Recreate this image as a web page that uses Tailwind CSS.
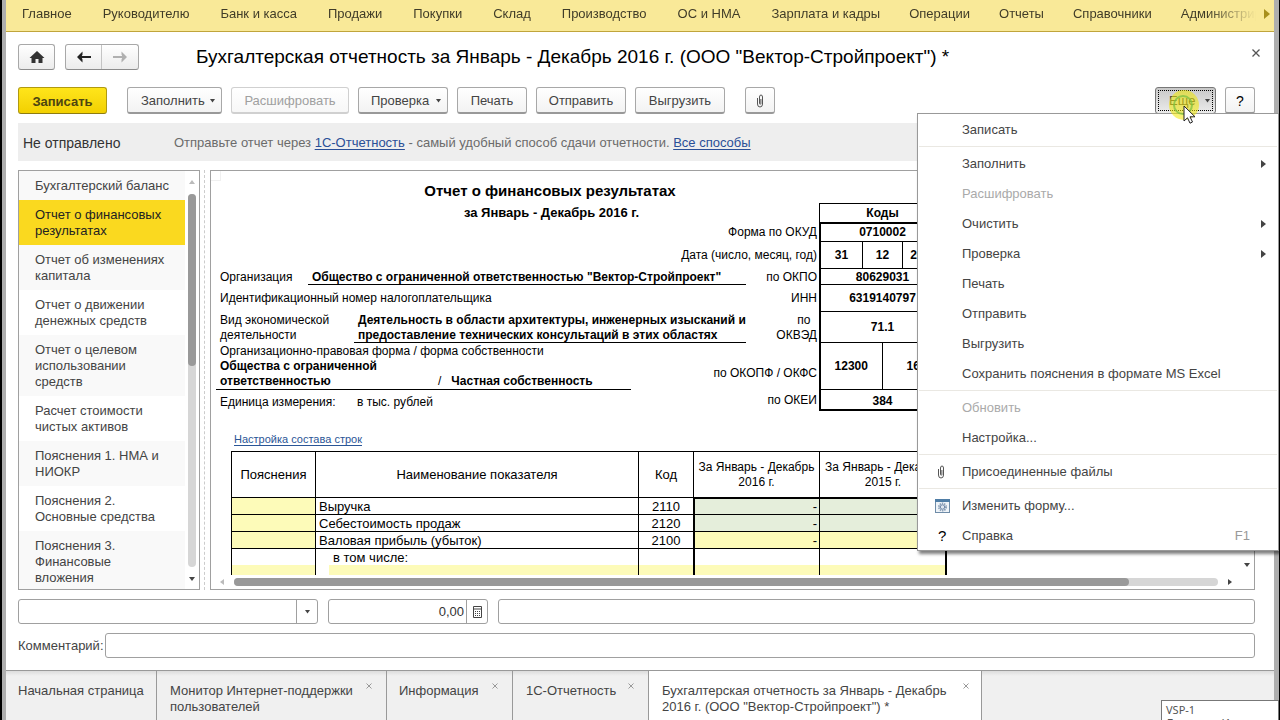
<!DOCTYPE html>
<html lang="ru">
<head>
<meta charset="utf-8">
<title>Бухгалтерская отчетность</title>
<script src="https://cdn.jsdelivr.net/npm/@tailwindcss/browser@4"></script>
</head>
<body class="h-screen overflow-hidden bg-black font-['Liberation_Sans',Arial,sans-serif] text-[13px] leading-4 text-[#444]">
<div class="relative flex h-screen flex-col overflow-hidden border-l-2 border-r border-black bg-white">
 <div class="flex min-h-0 flex-1 flex-col border-l-4 border-r-5 border-[#aeaeae]">

  <nav class="flex h-8 shrink-0 items-center border-b border-[#c0a53c] bg-[#f9e998] pl-4 pr-1 pb-1 text-[#403c28]">
   <div class="flex min-w-0 flex-1 gap-[29px] overflow-hidden whitespace-nowrap mask-r-from-96%">
    <div class="flex gap-[31px]"><a href="#">Главное</a><a href="#">Руководителю</a><a href="#">Банк и касса</a><a href="#">Продажи</a><a href="#">Покупки</a><a href="#">Склад</a><a href="#">Производство</a><a href="#">ОС и НМА</a><a href="#">Зарплата и кадры</a></div>
    <div class="flex gap-[29px]"><a href="#">Операции</a><a href="#">Отчеты</a><a href="#">Справочники</a><a href="#">Администрирование</a></div>
   </div>
   <button aria-label="Далее" class="ml-2"><svg class="h-2.5 w-1.5" viewBox="0 0 6 10"><path d="M0 0 6 5 0 10z" fill="#a8901c"/></svg></button>
  </nav>

  <main class="flex min-h-0 flex-1 flex-col pt-3 pr-[19px] pb-3 pl-3">
   <header class="flex h-[26px] shrink-0 items-center">
    <button aria-label="Домой" class="flex h-[26px] w-[37px] items-center justify-center rounded-[3px] border border-[#a8a8a8] border-b-[#8c8c8c] bg-linear-to-b from-white to-[#ececec] mr-[10px]"><svg class="h-3 w-4" viewBox="0 0 16 12"><path d="M8 0 15.500 7H13.500V12H9.500V8H6.500V12H2.500V7H.5z" fill="#333"/></svg></button>
    <div class="flex h-[26px] rounded-[3px] border border-[#a8a8a8] border-b-[#8c8c8c] bg-linear-to-b from-white to-[#ececec]">
     <button aria-label="Назад" class="flex w-9 items-center justify-center border-r border-[#c4c4c4]"><svg class="h-3 w-3.5" viewBox="0 0 14 12"><path d="M0 6 5.500 .5 5.500 3.500 4.800 5H14V7H4.800L5.500 8.500V11.500z" fill="#222"/></svg></button>
     <button aria-label="Вперед" class="flex w-9 items-center justify-center"><svg class="h-3 w-3.5" viewBox="0 0 14 12"><path d="M14 6 8.500 .5 8.500 3.500 9.200 5H0V7H9.200L8.500 8.500V11.500z" fill="#b0b0b0"/></svg></button>
    </div>
    <h1 class="ml-[57px] flex-1 whitespace-nowrap text-[19px] leading-6 text-black">Бухгалтерская отчетность за Январь - Декабрь 2016 г. (ООО "Вектор-Стройпроект") *</h1>
    <button aria-label="Закрыть" class="-mr-[5px] mb-2"><svg class="h-2 w-2" viewBox="0 0 8 8"><path d="M.5.5 7.500 7.500M7.500.5.5 7.500" stroke="#555" stroke-width="1.300"/></svg></button>
   </header>

   <div class="mt-[17px] flex h-[27px] shrink-0 items-stretch text-[#444] [&>button]:pt-0.5">
    <button class="w-[89px] rounded-[3px] border border-[#b09a10] border-b-[#8e7c10] bg-linear-to-b from-[#ffe51a] to-[#f2d000] font-bold text-[#4d4510]">Записать</button>
    <button class="ml-5 flex w-[95px] items-center justify-between rounded-[3px] border border-[#a8a8a8] border-b-2 border-b-[#999] bg-linear-to-b from-white to-[#f3f3f3] pl-[13px] pr-1.5">Заполнить<svg class="h-1 w-[5px]" viewBox="0 0 5 4"><path d="M0 0H5L2.500 3.500z" fill="#444"/></svg></button>
    <button disabled class="ml-[9px] w-[118px] rounded-[3px] border border-[#d0d0d0] border-b-2 bg-linear-to-b from-white to-[#f7f7f7] text-[#a0a0a0]">Расшифровать</button>
    <button class="ml-[9px] flex w-[90px] items-center justify-between rounded-[3px] border border-[#a8a8a8] border-b-2 border-b-[#999] bg-linear-to-b from-white to-[#f3f3f3] pl-[12px] pr-1.5">Проверка<svg class="h-1 w-[5px]" viewBox="0 0 5 4"><path d="M0 0H5L2.500 3.500z" fill="#444"/></svg></button>
    <button class="ml-[9px] w-[70px] rounded-[3px] border border-[#a8a8a8] border-b-2 border-b-[#999] bg-linear-to-b from-white to-[#f3f3f3]">Печать</button>
    <button class="ml-[9px] w-[90px] rounded-[3px] border border-[#a8a8a8] border-b-2 border-b-[#999] bg-linear-to-b from-white to-[#f3f3f3]">Отправить</button>
    <button class="ml-[9px] w-[90px] rounded-[3px] border border-[#a8a8a8] border-b-2 border-b-[#999] bg-linear-to-b from-white to-[#f3f3f3]">Выгрузить</button>
    <button aria-label="Присоединенные файлы" class="ml-5 flex w-[30px] items-center justify-center rounded-[3px] border border-[#a8a8a8] border-b-2 border-b-[#999] bg-linear-to-b from-white to-[#f3f3f3]"><svg class="h-3.5 w-2" viewBox="0 0 8 14" fill="none" stroke="#555"><path d="M1.500 4V10A2.500 3 0 0 0 6.500 10V3A1.500 2 0 0 0 3.500 3V9.500A.7.7 0 0 0 4.900 9.500V5"/></svg></button>
    <button class="ml-auto flex w-[61px] items-center rounded-[3px] border border-[#777] bg-linear-to-b from-[#c8c8c8] to-[#ececec] p-0.5"><span class="flex h-full flex-1 items-center justify-between border border-dotted border-black pl-2.5 pr-0.5">Еще<svg class="h-1 w-[5px]" viewBox="0 0 5 4"><path d="M0 0H5L2.500 3.500z" fill="#444"/></svg></span></button>
    <button class="ml-[9px] w-[30px] rounded-[3px] border border-[#a8a8a8] border-b-2 border-b-[#999] bg-linear-to-b from-white to-[#f3f3f3] text-sm text-black">?</button>
   </div>

   <div class="mt-[9px] flex h-[38px] shrink-0 items-center whitespace-nowrap bg-[#eee] pt-0.5 pl-[5px]">
    <p class="w-[151px] text-[14px] text-[#333]">Не отправлено</p>
    <p class="text-[#6b6b6b]">Отправьте отчет через <a href="#" class="text-[#2a4f97] underline underline-offset-2">1С-Отчетность</a> - самый удобный способ сдачи отчетности. <a href="#" class="text-[#2a4f97] underline underline-offset-2">Все способы</a></p>
   </div>

   <div class="mt-[9px] flex min-h-0 flex-1">
    <aside class="flex w-[182px] shrink-0 overflow-hidden border border-[#a0a0a0] text-[#444]">
     <ul class="w-[166px] [&_a]:block [&_a]:px-4 [&_a]:pt-[7px] [&_a]:pb-1.5 [&>li:nth-child(odd)]:bg-[#f9f9f9]">
      <li><a href="#">Бухгалтерский баланс</a></li>
      <li><a href="#" class="bg-[#fad91f] text-[#222]">Отчет о финансовых<br>результатах</a></li>
      <li><a href="#">Отчет об изменениях<br>капитала</a></li>
      <li><a href="#">Отчет о движении<br>денежных средств</a></li>
      <li><a href="#">Отчет о целевом<br>использовании<br>средств</a></li>
      <li><a href="#">Расчет стоимости<br>чистых активов</a></li>
      <li><a href="#">Пояснения 1. НМА и<br>НИОКР</a></li>
      <li><a href="#">Пояснения 2.<br>Основные средства</a></li>
      <li><a href="#">Пояснения 3.<br>Финансовые<br>вложения</a></li>
     </ul>
     <div class="flex flex-1 flex-col items-center pt-[9px] pb-2">
      <svg class="h-1 w-1.5" viewBox="0 0 6 4"><path d="M0 4H6L3 0z" fill="#bbb"/></svg>
      <div class="my-[10px] w-2 flex-1 rounded-full bg-[#d6d6d6]"><div class="h-[46%] rounded-full bg-[#999]"></div></div>
      <svg class="h-1 w-1.5" viewBox="0 0 6 4"><path d="M0 0H6L3 4z" fill="#444"/></svg>
     </div>
    </aside>
    <div class="mx-1 w-px border-l border-dashed border-[#ccc]"></div>

    <section class="ml-px flex min-w-0 flex-1 flex-col border border-[#a0a0a0] text-black">
     <div class="flex min-h-0 flex-1">
      <div class="min-w-0 flex-1 overflow-hidden whitespace-nowrap text-xs leading-[15px]">
       <div class="h-2.5 w-2.5 border-r border-b border-[#f0f0f0]"></div>
       <div class="w-[736px] pl-[9px]">
        <h2 class="h-[22px] w-[660px] text-center text-[15px] font-bold leading-5">Отчет о финансовых результатах</h2>
        <div class="flex h-[19px]">
         <p class="w-[599px] pl-[61px] text-center font-bold leading-5"><span class="block w-[541px] text-[13px]">за Январь - Декабрь 2016 г.</span></p>
         <p class="w-[127px] border border-b-0 border-black text-center font-bold leading-[18px]">Коды</p>
        </div>
        <div class="flex h-[19px]">
         <p class="w-[599px] pr-0.5 text-right leading-5">Форма по ОКУД</p>
         <p class="w-[127px] border-x-2 border-t-2 border-black text-center font-bold leading-[17px]">0710002</p>
        </div>
        <div class="flex h-[27px]">
         <p class="w-[599px] pr-0.5 text-right leading-7">Дата (число, месяц, год)</p>
         <div class="grid w-[127px] grid-cols-3 border-x-2 border-t border-black text-center font-bold leading-[26px]"><p>31</p><p class="border-x border-black">12</p><p>2016</p></div>
        </div>
        <div class="flex h-4 leading-[18px]">
         <p class="w-[88px]">Организация</p>
         <p class="h-[17px] w-[438px] border-b border-black pl-1 font-bold">Общество с ограниченной ответственностью "Вектор-Стройпроект"</p>
         <p class="w-[73px] pr-0.5 text-right">по ОКПО</p>
         <p class="w-[127px] border-x-2 border-t border-black text-center font-bold leading-4">80629031</p>
        </div>
        <div class="flex h-[27px] leading-[29px]">
         <p class="w-[526px]">Идентификационный номер налогоплательщика</p>
         <p class="w-[73px] pr-0.5 text-right">ИНН</p>
         <p class="w-[127px] border-x-2 border-t border-black text-center font-bold leading-[27px]">6319140797</p>
        </div>
        <div class="flex h-[31px]">
         <p class="w-[134px] pt-0.5">Вид экономической<br>деятельности</p>
         <p class="h-8 w-[392px] border-b border-black pt-0.5 pl-1 font-bold">Деятельность в области архитектуры, инженерных изысканий и<br>предоставление технических консультаций в этих областях</p>
         <p class="w-[73px] pt-0.5 pr-0.5 text-right">по &nbsp;<br>ОКВЭД</p>
         <p class="w-[127px] border-x-2 border-t border-black text-center font-bold leading-[30px]">71.1</p>
        </div>
        <div class="flex h-[47px]">
         <div class="w-[411px] pt-0.5">
          <p>Организационно-правовая форма / форма собственности</p>
          <div class="-ml-1 flex items-end border-b border-black pl-1 font-bold"><p class="w-[218px]">Общества с ограниченной<br>ответственностью</p><p><span class="font-normal">/</span>&nbsp;&nbsp; Частная собственность</p></div>
         </div>
         <p class="w-[188px] pt-6 pr-0.5 text-right">по ОКОПФ / ОКФС</p>
         <div class="grid w-[127px] grid-cols-2 border-x-2 border-t border-black text-center font-bold leading-[46px]"><p class="border-r border-black">12300</p><p>16</p></div>
        </div>
        <div class="flex h-[22px] leading-[26px]">
         <p class="w-[137px]">Единица измерения:</p><p class="w-[389px]">в тыс. рублей</p>
         <p class="w-[73px] pr-0.5 text-right leading-[22px]">по ОКЕИ</p>
         <p class="w-[127px] border-x-2 border-t border-b-2 border-black text-center font-bold leading-[22px]">384</p>
        </div>
        <p class="mt-[18px] pl-3.5 text-[11px] leading-5"><a href="#" class="text-[#2a5596] underline underline-offset-2">Настройка состава строк</a></p>
       </div>
       <table class="mt-0.5 ml-5 w-[716px] table-fixed border-separate border-spacing-0 border-r border-black text-[13px] [&_td]:border-black [&_td]:p-0 [&_th]:border-t [&_th]:border-l [&_th]:border-black [&_th]:p-0 [&_th]:font-normal">
        <colgroup><col class="w-[84px]"><col class="w-[323px]"><col class="w-[55px]"><col class="w-[126px]"><col></colgroup>
        <thead><tr class="h-[46px]"><th>Пояснения</th><th>Наименование показателя</th><th>Код</th><th class="text-xs leading-[15px]">За Январь - Декабрь<br>2016 г.</th><th class="text-xs leading-[15px]">За Январь - Декабрь<br>2015 г.</th></tr></thead>
        <tbody>
         <tr class="h-[17px]"><td class="border-t border-l bg-[#fdfbb9]"></td><td class="border-t border-l"><span class="pl-[3px]">Выручка</span></td><td class="border-t border-l text-center">2110</td><td class="border-t-2 border-l-2 bg-[#e5eedb] text-right"><span class="pr-0.5">-</span></td><td class="border-t-2 border-l border-r bg-[#e5eedb] text-right"><span class="pr-0.5">-</span></td></tr>
         <tr class="h-[17px]"><td class="border-t border-l bg-[#fdfbb9]"></td><td class="border-t border-l"><span class="pl-[3px]">Себестоимость продаж</span></td><td class="border-t border-l text-center">2120</td><td class="border-t border-l-2 bg-[#e5eedb] text-right"><span class="pr-0.5">-</span></td><td class="border-t border-l border-r bg-[#e5eedb] text-right"><span class="pr-0.5">-</span></td></tr>
         <tr class="h-[17px]"><td class="border-t border-l bg-[#fdfbb9]"></td><td class="border-t border-l"><span class="pl-[3px]">Валовая прибыль (убыток)</span></td><td class="border-t border-l text-center">2100</td><td class="border-t border-l-2 bg-[#fdfbb9] text-right"><span class="pr-0.5">-</span></td><td class="border-t border-l border-r bg-[#fdfbb9] text-right"><span class="pr-0.5">-</span></td></tr>
         <tr class="h-[17px]"><td class="border-t border-l"></td><td class="border-t border-l"><span class="pl-[17px]">в том числе:</span></td><td class="border-t border-l"></td><td class="border-t border-l-2"></td><td class="border-t border-l border-r"></td></tr>
         <tr class="h-[17px]"><td class="border-l bg-[#fdfbb9]"></td><td class="border-l"><div class="ml-[13px] h-[17px] bg-[#fdfbb9]"></div></td><td class="border-l bg-[#fdfbb9]"></td><td class="border-l-2 bg-[#fdfbb9]"></td><td class="border-l border-r bg-[#fdfbb9]"></td></tr>
        </tbody>
       </table>
      </div>
      <div class="flex w-3.5 items-end justify-center pb-2"><svg class="h-1 w-1.5" viewBox="0 0 6 4"><path d="M0 0H6L3 4z" fill="#444"/></svg></div>
     </div>
     <div class="flex h-3.5 items-center pr-[22px] pl-[9px]">
      <svg class="h-1.5 w-1" viewBox="0 0 4 6"><path d="M4 0V6L0 3z" fill="#bbb"/></svg>
      <div class="mx-[10px] h-2 flex-1 rounded-full bg-[#d6d6d6]"><div class="h-2 w-[91%] rounded-full bg-[#999]"></div></div>
      <svg class="h-1.5 w-1" viewBox="0 0 4 6"><path d="M0 0V6L4 3z" fill="#444"/></svg>
     </div>
    </section>
   </div>

   <div class="mt-[9px] flex h-[25px] shrink-0 gap-[10px]">
    <div class="relative flex w-[300px]">
     <select aria-label="Показатель" class="w-full appearance-none rounded-[3px] border border-[#a0a0a0] bg-white"><option></option></select>
     <span class="pointer-events-none absolute inset-y-0 right-0 flex w-[22px] items-center justify-center border-l border-[#a0a0a0]"><svg class="h-1 w-[5px]" viewBox="0 0 5 4"><path d="M0 0H5L2.500 3.500z" fill="#444"/></svg></span>
    </div>
    <div class="flex w-40 rounded-[3px] border border-[#a0a0a0]">
     <input aria-label="Сумма" value="0,00" class="min-w-0 flex-1 pr-0.5 text-right text-[13px] text-[#333]">
     <button aria-label="Калькулятор" class="flex w-[21px] items-center justify-center border-l border-[#a0a0a0]"><svg class="h-3 w-[9px]" viewBox="0 0 9 12" fill="none" stroke="#444"><path d="M.5.5H8.500V11.500H.5zM1 3H8"/><path d="M2 5.500H8M2 7.500H8M2 9.500H8" stroke-dasharray="1 1"/></svg></button>
    </div>
    <input aria-label="Описание" class="min-w-0 flex-1 rounded-[3px] border border-[#a0a0a0]">
   </div>
   <div class="mt-[9px] flex h-[25px] shrink-0 items-stretch">
    <label for="comment" class="w-[87px] self-center">Комментарий:</label>
    <input id="comment" class="min-w-0 flex-1 rounded-[3px] border border-[#a0a0a0]">
   </div>
  </main>

  <footer class="flex h-[50px] shrink-0 border-t border-[#999] bg-linear-to-b from-[#dcdcdc] from-0% to-[#f0f0f0] to-10% text-[#444]">
   <div class="w-[150px] pt-3 pl-3"><a href="#">Начальная страница</a></div>
   <div class="flex w-[230px] justify-between border-l border-[#999] pt-3 pr-3.5 pl-[13px]"><a href="#">Монитор Интернет-поддержки<br>пользователей</a><button aria-label="Закрыть" class="h-1.5"><svg class="h-1.5 w-1.5" viewBox="0 0 6 6"><path d="M.5.5 5.500 5.500M5.500.5.5 5.500" stroke="#999"/></svg></button></div>
   <div class="flex w-[126px] justify-between border-l border-[#999] pt-3 pr-3.5 pl-3"><a href="#">Информация</a><button aria-label="Закрыть" class="h-1.5"><svg class="h-1.5 w-1.5" viewBox="0 0 6 6"><path d="M.5.5 5.500 5.500M5.500.5.5 5.500" stroke="#999"/></svg></button></div>
   <div class="flex w-[136px] justify-between border-l border-[#999] pt-3 pr-3.5 pl-[13px]"><a href="#">1С-Отчетность</a><button aria-label="Закрыть" class="h-1.5"><svg class="h-1.5 w-1.5" viewBox="0 0 6 6"><path d="M.5.5 5.500 5.500M5.500.5.5 5.500" stroke="#999"/></svg></button></div>
   <div class="flex w-[334px] justify-between border-x border-[#999] bg-white pt-3 pr-3 pl-[13px]"><a href="#">Бухгалтерская отчетность за Январь - Декабрь<br>2016 г. (ООО "Вектор-Стройпроект") *</a><button aria-label="Закрыть" class="h-1.5"><svg class="h-1.5 w-1.5" viewBox="0 0 6 6"><path d="M.5.5 5.500 5.500M5.500.5.5 5.500" stroke="#999"/></svg></button></div>
  </footer>
 </div>

 <!-- «Еще» drop-down menu -->
 <div role="menu" class="absolute top-[113px] right-0 w-[362px] border border-[#999] bg-white shadow-[2px_3px_3px_rgba(0,0,0,.5)] [&_button]:flex [&_button]:h-[30px] [&_button]:w-full [&_button]:items-center [&_button]:pt-0.5 [&_hr]:mx-px [&_hr]:my-0 [&_hr]:h-1 [&_hr]:border-0 [&_hr]:bg-linear-to-b [&_hr]:from-transparent [&_hr]:from-50% [&_hr]:via-[#d5d1c6] [&_hr]:via-50% [&_hr]:to-transparent [&_hr]:to-75%">
  <button role="menuitem"><span class="w-11"></span>Записать</button>
  <hr>
  <button role="menuitem"><span class="w-11"></span>Заполнить<svg class="mr-3 ml-auto h-2 w-[5px]" viewBox="0 0 5 8"><path d="M0 0V8L5 4z" fill="#444"/></svg></button>
  <button role="menuitem" disabled class="text-[#aaa]"><span class="w-11"></span>Расшифровать</button>
  <button role="menuitem"><span class="w-11"></span>Очистить<svg class="mr-3 ml-auto h-2 w-[5px]" viewBox="0 0 5 8"><path d="M0 0V8L5 4z" fill="#444"/></svg></button>
  <button role="menuitem"><span class="w-11"></span>Проверка<svg class="mr-3 ml-auto h-2 w-[5px]" viewBox="0 0 5 8"><path d="M0 0V8L5 4z" fill="#444"/></svg></button>
  <button role="menuitem"><span class="w-11"></span>Печать</button>
  <button role="menuitem"><span class="w-11"></span>Отправить</button>
  <button role="menuitem"><span class="w-11"></span>Выгрузить</button>
  <button role="menuitem"><span class="w-11"></span>Сохранить пояснения в формате MS Excel</button>
  <hr>
  <button role="menuitem" disabled class="text-[#aaa]"><span class="w-11"></span>Обновить</button>
  <button role="menuitem"><span class="w-11"></span>Настройка...</button>
  <hr>
  <button role="menuitem"><span class="w-11 pl-[19px]"><svg class="h-3.5 w-2" viewBox="0 0 8 14" fill="none" stroke="#555"><path d="M1.500 4V10A2.500 3 0 0 0 6.500 10V3A1.500 2 0 0 0 3.500 3V9.500A.7.7 0 0 0 4.900 9.500V5"/></svg></span>Присоединенные файлы</button>
  <hr>
  <button role="menuitem"><span class="w-11 pl-[17px]"><svg class="h-3.5 w-[15px]" viewBox="0 0 15 14"><rect x=".5" y=".5" width="14" height="13" fill="#eef3f8" stroke="#6f8ca8"/><path d="M0 0H15V3H0z" fill="#4f7da6"/><circle cx="7.500" cy="8" r="3.500" fill="none" stroke="#8ba0b8" stroke-width="2" stroke-dasharray="1.400 .8"/><circle cx="7.500" cy="8" r="2.200" fill="#dfe7f0" stroke="#7088a8"/></svg></span>Изменить форму...</button>
  <button role="menuitem"><span class="w-11 pl-5 text-left text-[15px] text-black">?</span>Справка<span class="mr-7 ml-auto text-[#999]">F1</span></button>
 </div>

 <!-- click highlight and pointer -->
 <svg class="pointer-events-none absolute top-[88px] right-[78px] h-9 w-8" viewBox="0 0 32 36"><circle cx="15" cy="17" r="15" fill="#f0e800" fill-opacity=".55"/><circle cx="14" cy="17" r="9" fill="none" stroke="#7cc043" stroke-opacity=".75" stroke-width="2"/><path d="M15 18V33L18.500 29.800 21 35.200 23.500 34 21 28.800H26z" fill="#fff" stroke="#222"/></svg>

 <div class="absolute right-0 bottom-0 h-5 w-[118px] overflow-hidden border border-b-0 border-[#777] bg-white pt-0.5 pl-1 font-['Noto_Sans',sans-serif] text-[11px] leading-[13px] whitespace-nowrap text-[#555]">VSP-1<br>Лицензия И</div>
</div>
</body>
</html>
